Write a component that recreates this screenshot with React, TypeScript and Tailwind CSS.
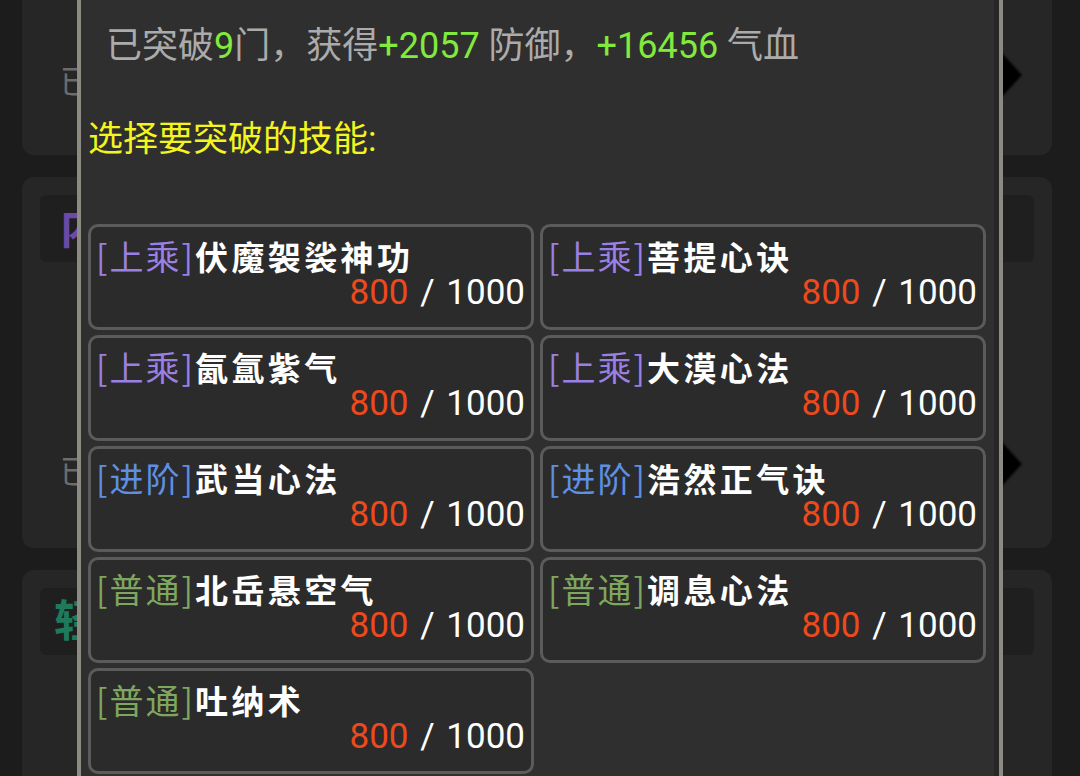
import React from "react";

type Tier = "上乘" | "进阶" | "普通";

const tierColor: Record<Tier, string> = {
  上乘: "text-[#9a80e4]",
  进阶: "text-[#5e8fe2]",
  普通: "text-[#7fa65e]",
};

const skills: { tier: Tier; name: string }[] = [
  { tier: "上乘", name: "伏魔袈裟神功" },
  { tier: "上乘", name: "菩提心诀" },
  { tier: "上乘", name: "氤氲紫气" },
  { tier: "上乘", name: "大漠心法" },
  { tier: "进阶", name: "武当心法" },
  { tier: "进阶", name: "浩然正气诀" },
  { tier: "普通", name: "北岳悬空气" },
  { tier: "普通", name: "调息心法" },
  { tier: "普通", name: "吐纳术" },
];

const FONT = "font-['Roboto','Noto_Sans_CJK_SC',sans-serif]";

function Arrow() {
  return (
    <svg width="24" height="48" viewBox="0 0 24 48" className="blur-[1px]">
      <polygon points="0,0 22,24 0,48" fill="#000" />
    </svg>
  );
}

function SkillCard({ tier, name }: { tier: Tier; name: string }) {
  return (
    <div className="h-[106px] rounded-[10px] border-[3px] border-[#5b5b5b] bg-[#2b2b2b] pl-[5px] pr-[6px] pt-[11px]">
      <div className="flex items-center leading-[36px] font-['Noto_Sans_CJK_SC',sans-serif]">
        <span className={`text-[34px] tracking-[2px] ${tierColor[tier]}`}>[{tier}]</span>
        <span className="text-[33px] font-bold tracking-[3.4px] text-white">{name}</span>
      </div>
      <div className="text-right text-[35px] leading-[37px] text-white">
        <span className="text-[#ec4a1c]">800</span> <span className="mx-[3px]">/</span> 1000
      </div>
    </div>
  );
}

export default function App() {
  return (
    <div className={`relative h-[776px] w-[1080px] overflow-hidden bg-[#1c1c1c] ${FONT}`}>
      {/* page behind the dialog */}
      <div className="flex h-full flex-col gap-[22px] pl-[22px] pr-[28px]">
        <div className="flex h-[155px] shrink-0 items-center justify-between rounded-b-[12px] bg-[#262626] pl-[38px] pr-[28px] pt-[4px] pb-[10px]">
          <span className="mt-[14px] text-[32px] text-[#6c6c6c]">已突破9门</span>
          <Arrow />
        </div>
        <div className="flex h-[371px] shrink-0 flex-col rounded-[12px] bg-[#262626] px-[18px] pt-[18px]">
          <div className="flex h-[67px] items-center rounded-[6px] bg-[#1f1f1f] px-[20px]">
            <span className="text-[44px] font-bold text-[#6a4aa6]">内功</span>
          </div>
          <div className="mt-[170px] flex items-center justify-between pl-[20px] pr-[10px]">
            <span className="mt-[16px] text-[32px] text-[#6c6c6c]">已突破9门</span>
            <Arrow />
          </div>
        </div>
        <div className="flex flex-1 flex-col rounded-t-[12px] bg-[#262626] px-[18px] pt-[18px]">
          <div className="flex h-[67px] items-center rounded-[6px] bg-[#1f1f1f] px-[14px]">
            <span className="text-[44px] font-bold text-[#1e7a5c]">轻功</span>
          </div>
        </div>
      </div>

      {/* breakthrough dialog */}
      <div className="absolute left-[77px] top-0 flex h-full w-[926px] border-x-[4px] border-[#8d8a84] bg-[#2f2f2f]">
        <div className="flex flex-1 flex-col pl-[7px] pt-[21px]">
          <div className="pl-[18px] text-[36px] leading-[50px] text-[#ababab]">
            已突破<span className="text-[#82ea3c]">9</span>门，获得
            <span className="text-[#82ea3c]">+2057</span> 防御，
            <span className="text-[#82ea3c]">+16456</span> 气血
          </div>
          <div className="mt-[44px] text-[35px] leading-[50px] text-[#f4f41e]">选择要突破的技能:</div>
          <div className="mt-[59px] grid w-[898px] grid-cols-2 gap-x-[6px] gap-y-[5px]">
            {skills.map((s) => (
              <SkillCard key={s.name} tier={s.tier} name={s.name} />
            ))}
          </div>
        </div>
        <div className="w-[5px] bg-[#262626]" />
      </div>
    </div>
  );
}
